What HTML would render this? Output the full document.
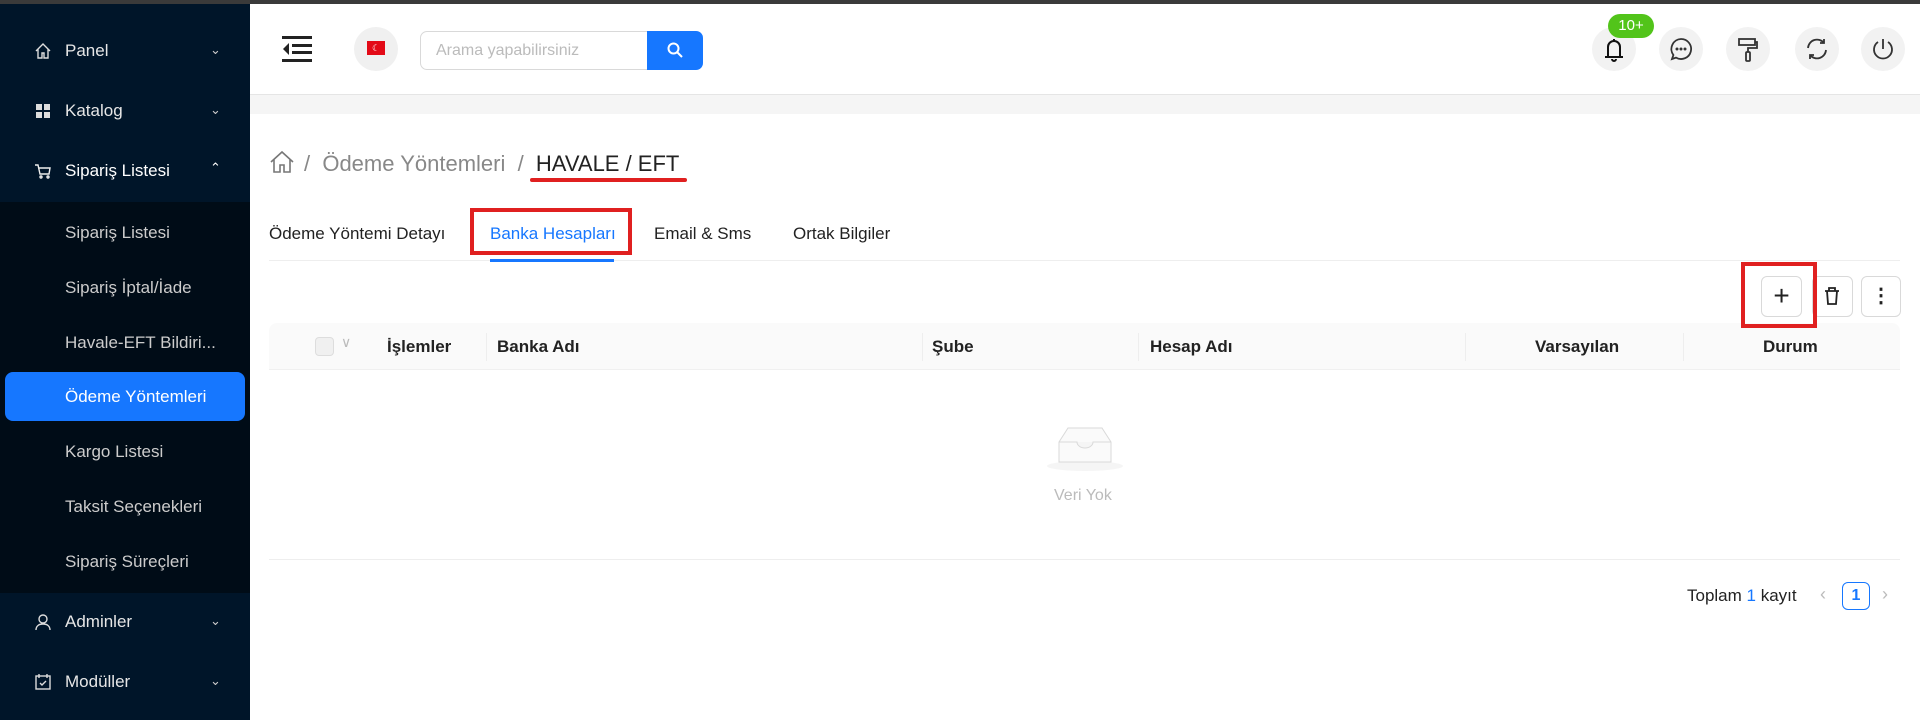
<!DOCTYPE html>
<html><head><meta charset="utf-8"><style>
*{margin:0;padding:0;box-sizing:border-box}
body{width:1920px;height:720px;overflow:hidden;font-family:"Liberation Sans",sans-serif;background:#fff;position:relative;color:#222}
.abs{position:absolute}
#top{left:0;top:0;width:1920px;height:4px;background:#3a3a3a}
#side{left:0;top:4px;width:250px;height:716px;background:#001529}
#sub{left:0;top:202px;width:250px;height:391px;background:#000c17}
.mi{position:absolute;left:65px;color:#e6e6e6;font-size:17px;line-height:20px}
.ic{position:absolute;left:34px;width:18px;height:18px}
.ar{position:absolute;left:210px;color:#ccc;font-size:13px}
#sel{left:5px;top:372px;width:240px;height:49px;background:#1677ff;border-radius:8px}
#hdr{left:250px;top:4px;width:1670px;height:91px;border-bottom:1px solid #e5e5e5}
#band{left:250px;top:95px;width:1670px;height:19px;background:#f5f5f5}
.circ{position:absolute;width:44px;height:44px;border-radius:50%;background:#f2f2f2;top:27px}
.th{position:absolute;top:337px;font-size:17px;font-weight:bold;color:#222}
.dv{position:absolute;top:333px;width:1px;height:28px;background:#eee}
</style></head><body>
<div id="top" class="abs"></div>
<div id="side" class="abs"></div>
<div id="sub" class="abs"></div>
<div id="sel" class="abs"></div>
<svg class="ic" style="top:42px" viewBox="0 0 18 18" fill="none" stroke="#ddd" stroke-width="1.4"><path d="M2 9L9 2l7 7M4 7v9h4v-5h2v5h4V7"/></svg>
<div class="mi" style="top:41px">Panel</div><div class="ar" style="top:42px">&#8964;</div>
<svg class="ic" style="top:102px" viewBox="0 0 18 18" fill="#ddd"><rect x="2" y="2" width="6" height="6"/><rect x="10" y="2" width="6" height="6"/><rect x="2" y="10" width="6" height="6"/><rect x="10" y="10" width="6" height="6"/></svg>
<div class="mi" style="top:101px">Katalog</div><div class="ar" style="top:102px">&#8964;</div>
<svg class="ic" style="top:162px" viewBox="0 0 18 18" fill="none" stroke="#eee" stroke-width="1.4"><path d="M1 3h3l2 9h9l1-6H5"/><circle cx="7" cy="15" r="1"/><circle cx="14" cy="15" r="1"/></svg>
<div class="mi" style="top:161px;color:#fff">Sipariş Listesi</div><div class="ar" style="top:160px;color:#fff">&#8963;</div>
<div class="mi" style="top:223px;color:#ccc">Sipariş Listesi</div>
<div class="mi" style="top:278px;color:#ccc">Sipariş İptal/İade</div>
<div class="mi" style="top:333px;color:#ccc">Havale-EFT Bildiri...</div>
<div class="mi" style="top:387px;color:#fff">Ödeme Yöntemleri</div>
<div class="mi" style="top:442px;color:#ccc">Kargo Listesi</div>
<div class="mi" style="top:497px;color:#ccc">Taksit Seçenekleri</div>
<div class="mi" style="top:552px;color:#ccc">Sipariş Süreçleri</div>
<svg class="ic" style="top:613px" viewBox="0 0 18 18" fill="none" stroke="#ddd" stroke-width="1.4"><circle cx="9" cy="6" r="4"/><path d="M2 17c0-4 3-6 7-6s7 2 7 6"/></svg>
<div class="mi" style="top:612px">Adminler</div><div class="ar" style="top:613px">&#8964;</div>
<svg class="ic" style="top:673px" viewBox="0 0 18 18" fill="none" stroke="#ddd" stroke-width="1.4"><rect x="2" y="3" width="14" height="13"/><path d="M5 1v4M13 1v4M6 10l2 2 4-4"/></svg>
<div class="mi" style="top:672px">Modüller</div><div class="ar" style="top:673px">&#8964;</div>

<div id="hdr" class="abs"></div>
<div id="band" class="abs"></div>
<svg class="abs" style="left:282px;top:36px" width="30" height="26" viewBox="0 0 30 26" fill="#222"><rect x="0" y="0" width="30" height="3"/><rect x="10" y="8" width="20" height="3"/><rect x="10" y="15" width="20" height="3"/><rect x="0" y="23" width="30" height="3"/><path d="M7 7v12L1 13z"/></svg>
<div class="circ" style="left:354px;background:#f0f0f0"></div>
<div class="abs" style="left:367px;top:41px;width:18px;height:14px;background:#e30a17;color:#fff;font-size:9px;text-align:center;line-height:14px">☾</div>
<div class="abs" style="left:420px;top:31px;width:228px;height:39px;border:1px solid #d9d9d9;border-radius:7px 0 0 7px;color:#bbb;font-size:16px;line-height:37px;padding-left:15px">Arama yapabilirsiniz</div>
<div class="abs" style="left:647px;top:31px;width:56px;height:39px;background:#1677ff;border-radius:0 7px 7px 0"></div>
<svg class="abs" style="left:666px;top:41px" width="18" height="18" viewBox="0 0 18 18" fill="none" stroke="#fff" stroke-width="2"><circle cx="7.5" cy="7.5" r="5"/><path d="M11 11l5 5"/></svg>

<div class="circ" style="left:1592px"></div>
<svg class="abs" style="left:1602px;top:37px" width="24" height="26" viewBox="0 0 24 26" fill="none" stroke="#111" stroke-width="2"><path d="M6 19V10a6 6 0 0 1 12 0v9M3 20h18M12 2v2M10 22a2 2 0 0 0 4 0"/></svg>
<div class="abs" style="left:1608px;top:14px;width:46px;height:24px;border-radius:12px;background:#52c41a;color:#fff;font-size:15px;text-align:center;line-height:24px">10+</div>
<div class="circ" style="left:1659px"></div>
<svg class="abs" style="left:1669px;top:37px" width="24" height="24" viewBox="0 0 24 24" fill="none" stroke="#333" stroke-width="1.8"><path d="M12 2a10 10 0 1 1-5 18.6L3 22l1.4-4A10 10 0 0 1 12 2z"/><circle cx="8" cy="12" r=".6" fill="#333"/><circle cx="12" cy="12" r=".6" fill="#333"/><circle cx="16" cy="12" r=".6" fill="#333"/></svg>
<div class="circ" style="left:1726px"></div>
<svg class="abs" style="left:1736px;top:37px" width="24" height="26" viewBox="0 0 24 26" fill="none" stroke="#333" stroke-width="1.8"><rect x="3" y="2" width="16" height="6"/><path d="M19 5h2v6h-9v4"/><rect x="10" y="15" width="4" height="9" rx="1"/></svg>
<div class="circ" style="left:1795px"></div>
<svg class="abs" style="left:1805px;top:37px" width="24" height="24" viewBox="0 0 24 24" fill="none" stroke="#333" stroke-width="1.8"><path d="M3 11a9 9 0 0 1 16-5M21 13a9 9 0 0 1-16 5M19 2v4h-4M5 22v-4h4"/></svg>
<div class="circ" style="left:1861px"></div>
<svg class="abs" style="left:1871px;top:37px" width="24" height="24" viewBox="0 0 24 24" fill="none" stroke="#333" stroke-width="1.8"><path d="M12 2v10M7 5a9 9 0 1 0 10 0"/></svg>

<svg class="abs" style="left:269px;top:150px" width="26" height="24" viewBox="0 0 26 24" fill="none" stroke="#777" stroke-width="1.6"><path d="M2 12L13 2l11 10M5 9v13h6v-7h4v7h6V9"/></svg>
<div class="abs" style="left:304px;top:151px;font-size:22px;color:#888">/ &nbsp;Ödeme Yöntemleri &nbsp;/ &nbsp;<span style="color:#222">HAVALE / EFT</span></div>
<div class="abs" style="left:530px;top:178px;width:157px;height:4px;background:#e02020;border-radius:2px"></div>

<div class="abs" style="left:269px;top:224px;font-size:17px;color:#222">Ödeme Yöntemi Detayı</div>
<div class="abs" style="left:490px;top:224px;font-size:17px;color:#1677ff">Banka Hesapları</div>
<div class="abs" style="left:654px;top:224px;font-size:17px;color:#222">Email &amp; Sms</div>
<div class="abs" style="left:793px;top:224px;font-size:17px;color:#222">Ortak Bilgiler</div>
<div class="abs" style="left:470px;top:208px;width:162px;height:47px;border:4px solid #e02020"></div>
<div class="abs" style="left:269px;top:260px;width:1631px;height:1px;background:#eee"></div>
<div class="abs" style="left:490px;top:259px;width:124px;height:3px;background:#1677ff"></div>

<div class="abs" style="left:269px;top:323px;width:1631px;height:47px;background:#fafafa;border-radius:8px 8px 0 0;border-bottom:1px solid #f0f0f0"></div>

<div class="abs" style="left:1761px;top:276px;width:41px;height:41px;border:1px solid #d9d9d9;border-radius:6px;text-align:center;line-height:38px;font-size:28px;font-weight:300;background:#fff">+</div>
<div class="abs" style="left:1812px;top:276px;width:41px;height:41px;border:1px solid #d9d9d9;border-radius:6px"></div>
<svg class="abs" style="left:1822px;top:286px" width="20" height="20" viewBox="0 0 20 20" fill="none" stroke="#222" stroke-width="1.8"><path d="M3 5h14M7 5V2h6v3M5 5l1 13h8l1-13"/></svg>
<div class="abs" style="left:1741px;top:262px;width:76px;height:66px;border:4px solid #e02020;z-index:5"></div>
<div class="abs" style="left:1861px;top:276px;width:40px;height:41px;border:1px solid #d9d9d9;border-radius:6px;text-align:center;line-height:38px;font-size:20px;font-weight:bold">⋮</div>

<div class="abs" style="left:315px;top:337px;width:19px;height:19px;border:1px solid #ddd;border-radius:4px;background:#f0f0f0"></div>
<div class="abs" style="left:341px;top:334px;color:#bbb;font-size:14px">∨</div>
<div class="th" style="left:387px">İşlemler</div>
<div class="dv" style="left:486px"></div>
<div class="th" style="left:497px">Banka Adı</div>
<div class="dv" style="left:922px"></div>
<div class="th" style="left:932px">Şube</div>
<div class="dv" style="left:1138px"></div>
<div class="th" style="left:1150px">Hesap Adı</div>
<div class="dv" style="left:1465px"></div>
<div class="th" style="left:1535px">Varsayılan</div>
<div class="dv" style="left:1683px"></div>
<div class="th" style="left:1763px">Durum</div>

<svg class="abs" style="left:1045px;top:420px" width="80" height="52" viewBox="0 0 80 52"><ellipse cx="40" cy="46" rx="38" ry="5" fill="#f5f5f5"/><path d="M14 22l9-14h34l9 14v20H14z" fill="#fafafa" stroke="#d9d9d9"/><path d="M14 22h18a8 6 0 0 0 16 0h18" fill="#f5f5f5" stroke="#d9d9d9"/></svg>
<div class="abs" style="left:1054px;top:487px;color:#bbb;font-size:16px">Veri Yok</div>
<div class="abs" style="left:269px;top:559px;width:1631px;height:1px;background:#eee"></div>

<div class="abs" style="left:1687px;top:586px;font-size:17px;color:#222">Toplam <span style="color:#1677ff">1</span> kayıt</div>
<div class="abs" style="left:1820px;top:584px;font-size:18px;color:#bbb">‹</div>
<div class="abs" style="left:1842px;top:582px;width:28px;height:28px;border:1px solid #1677ff;border-radius:6px;color:#1677ff;font-size:16px;text-align:center;line-height:26px;font-weight:bold">1</div>
<div class="abs" style="left:1882px;top:584px;font-size:18px;color:#bbb">›</div>
</body></html>
